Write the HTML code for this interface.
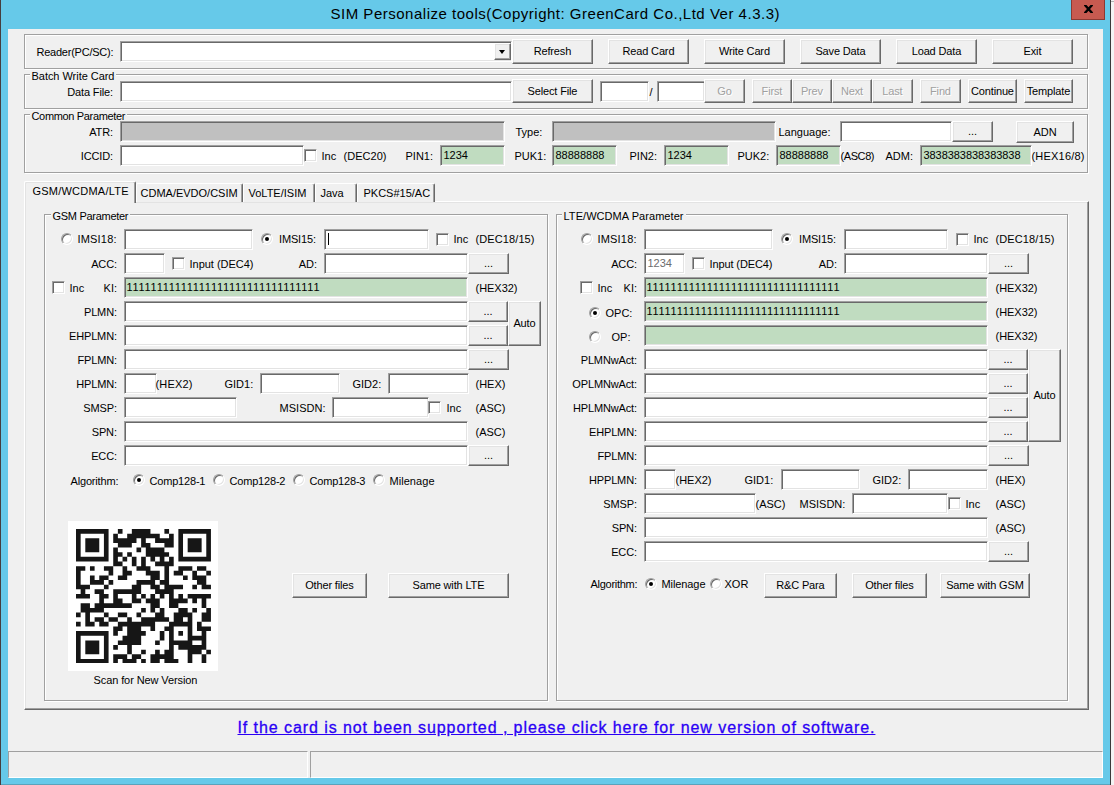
<!DOCTYPE html><html><head><meta charset="utf-8"><style>
*{margin:0;padding:0;box-sizing:border-box}
html,body{width:1114px;height:785px;overflow:hidden;background:#66c9e9;font-family:"Liberation Sans",sans-serif;font-size:11px;color:#000}
div{position:absolute}
.t{white-space:pre}
.ed{border:1px solid;border-color:#a0a0a0 #fff #fff #a0a0a0;box-shadow:inset 1px 1px #696969,inset -1px -1px #e3e3e3}
.bt{background:#f0f0f0;border:1px solid;border-color:#fff #696969 #696969 #fff;box-shadow:inset -1px -1px #a0a0a0,inset 1px 1px #e3e3e3}
.gp{border:1px solid #a0a0a0;box-shadow:inset 1px 1px #fff,1px 1px #fff}
.ck{background:#fff;border:1px solid;border-color:#a0a0a0 #fff #fff #a0a0a0;box-shadow:inset 1px 1px #696969,inset -1px -1px #e3e3e3}
.rd{width:12px;height:12px;border-radius:6px;background:#fff;border:1px solid;border-color:#a0a0a0 #fff #fff #a0a0a0;box-shadow:inset 1px 1px #696969,inset -1px -1px #e3e3e3}
</style></head><body>
<div style="left:0px;top:0px;width:1px;height:785px;background:#463e3e"></div>
<div style="left:1110px;top:0px;width:1px;height:785px;background:#3a3a3a"></div>
<div style="left:1px;top:784px;width:1109px;height:1px;background:#5aa3bb"></div>
<div style="left:1111px;top:0px;width:3px;height:785px;background:#f4f4f4"></div>
<div style="left:8px;top:29px;width:1095px;height:749px;background:#f0f0f0"></div>
<div style="left:1071px;top:0px;width:34px;height:20px;background:#c75a50;border:1px solid #8b3a33;border-top:0"></div>
<svg style="position:absolute;left:1084px;top:5px;overflow:hidden" width="9" height="8" viewBox="0 0 9 8"><path d="M0.6 -0.3 L8.4 8.3 M8.4 -0.3 L0.6 8.3" stroke="#000" stroke-width="2.4"/></svg>
<div style="left:1111px;top:1px;width:3px;height:1px;background:#b4b4b4"></div>
<div class="gp" style="left:24px;top:34px;width:1064px;height:35px"></div>
<div class="ed" style="left:120px;top:41px;width:392px;height:21px;background:#fff"></div>
<div class="bt" style="left:494px;top:43px;width:17px;height:17px"></div>
<div style="left:499px;top:50px;width:0;height:0;border-left:3.5px solid transparent;border-right:3.5px solid transparent;border-top:4px solid #000"></div>
<div class="bt" style="left:512px;top:39px;width:81px;height:25px"></div>
<div class="bt" style="left:608px;top:39px;width:81px;height:25px"></div>
<div class="bt" style="left:704px;top:39px;width:81px;height:25px"></div>
<div class="bt" style="left:800px;top:39px;width:81px;height:25px"></div>
<div class="bt" style="left:896px;top:39px;width:81px;height:25px"></div>
<div class="bt" style="left:992px;top:39px;width:81px;height:25px"></div>
<div class="gp" style="left:24px;top:74px;width:1064px;height:35px"></div>
<div class="ed" style="left:120px;top:81px;width:392px;height:21px;background:#fff"></div>
<div class="bt" style="left:512px;top:79px;width:81px;height:24px"></div>
<div class="ed" style="left:600px;top:81px;width:49px;height:21px;background:#fff"></div>
<div class="ed" style="left:657px;top:81px;width:48px;height:21px;background:#fff"></div>
<div class="bt" style="left:704px;top:79px;width:41px;height:24px"></div>
<div class="bt" style="left:752px;top:79px;width:40px;height:24px"></div>
<div class="bt" style="left:792px;top:79px;width:40px;height:24px"></div>
<div class="bt" style="left:832px;top:79px;width:40px;height:24px"></div>
<div class="bt" style="left:872px;top:79px;width:41px;height:24px"></div>
<div class="bt" style="left:920px;top:79px;width:41px;height:24px"></div>
<div class="bt" style="left:968px;top:79px;width:49px;height:24px"></div>
<div class="bt" style="left:1024px;top:79px;width:49px;height:24px"></div>
<div class="gp" style="left:24px;top:114px;width:1064px;height:59px"></div>
<div class="ed" style="left:120px;top:121px;width:385px;height:21px;background:#c0c0c0"></div>
<div class="ed" style="left:552px;top:121px;width:224px;height:21px;background:#c0c0c0"></div>
<div class="ed" style="left:840px;top:121px;width:112px;height:21px;background:#fff"></div>
<div class="bt" style="left:952px;top:121px;width:41px;height:21px"></div>
<div class="bt" style="left:1016px;top:121px;width:58px;height:22px"></div>
<div class="ed" style="left:120px;top:145px;width:184px;height:21px;background:#fff"></div>
<div class="ck" style="left:304px;top:149px;width:13px;height:13px"></div>
<div class="ed" style="left:440px;top:145px;width:65px;height:21px;background:#c0dcc0"></div>
<div class="ed" style="left:552px;top:145px;width:65px;height:21px;background:#c0dcc0"></div>
<div class="ed" style="left:664px;top:145px;width:65px;height:21px;background:#c0dcc0"></div>
<div class="ed" style="left:776px;top:145px;width:65px;height:21px;background:#c0dcc0"></div>
<div class="ed" style="left:920px;top:145px;width:112px;height:21px;background:#c0dcc0"></div>
<div style="left:24px;top:201px;width:1065px;height:509px;border:1px solid;border-color:#fff #696969 #696969 #fff;box-shadow:inset -1px -1px #a0a0a0,inset 1px 1px #e3e3e3"></div>
<div style="left:136px;top:183px;width:107px;height:19px;background:#f0f0f0;border:1px solid;border-bottom:0;border-color:#fff #696969 #fff #fff;box-shadow:inset -1px 0 #a0a0a0;border-radius:2px 2px 0 0"></div>
<div style="left:243px;top:183px;width:72px;height:19px;background:#f0f0f0;border:1px solid;border-bottom:0;border-color:#fff #696969 #fff #fff;box-shadow:inset -1px 0 #a0a0a0;border-radius:2px 2px 0 0"></div>
<div style="left:315px;top:183px;width:42px;height:19px;background:#f0f0f0;border:1px solid;border-bottom:0;border-color:#fff #696969 #fff #fff;box-shadow:inset -1px 0 #a0a0a0;border-radius:2px 2px 0 0"></div>
<div style="left:357px;top:183px;width:78px;height:19px;background:#f0f0f0;border:1px solid;border-bottom:0;border-color:#fff #696969 #fff #fff;box-shadow:inset -1px 0 #a0a0a0;border-radius:2px 2px 0 0"></div>
<div style="left:24px;top:181px;width:112px;height:22px;background:#f0f0f0;border:1px solid;border-bottom:0;border-color:#fff #696969 #fff #fff;box-shadow:inset -1px 0 #a0a0a0,inset 1px 1px #e3e3e3;border-radius:2px 2px 0 0"></div>
<div class="gp" style="left:44px;top:214px;width:504px;height:487px"></div>
<div class="rd" style="left:61px;top:233px"></div>
<div class="ed" style="left:124px;top:229px;width:129px;height:21px;background:#fff"></div>
<div class="rd" style="left:261px;top:233px"></div>
<div style="left:265px;top:237px;width:4px;height:4px;border-radius:2px;background:#000"></div>
<div class="ed" style="left:324px;top:229px;width:105px;height:21px;background:#fff"></div>
<div style="left:328px;top:233px;width:1px;height:12px;background:#000"></div>
<div class="ck" style="left:436px;top:233px;width:13px;height:13px"></div>
<div class="ed" style="left:124px;top:253px;width:41px;height:21px;background:#fff"></div>
<div class="ck" style="left:172px;top:257px;width:13px;height:13px"></div>
<div class="ed" style="left:324px;top:253px;width:144px;height:21px;background:#fff"></div>
<div class="bt" style="left:468px;top:253px;width:41px;height:21px"></div>
<div class="ck" style="left:52px;top:281px;width:13px;height:13px"></div>
<div class="ed" style="left:124px;top:277px;width:344px;height:21px;background:#c0dcc0"></div>
<div class="ed" style="left:124px;top:301px;width:344px;height:21px;background:#fff"></div>
<div class="bt" style="left:468px;top:301px;width:40px;height:21px"></div>
<div class="bt" style="left:508px;top:301px;width:33px;height:45px"></div>
<div class="ed" style="left:124px;top:325px;width:344px;height:21px;background:#fff"></div>
<div class="bt" style="left:468px;top:325px;width:40px;height:21px"></div>
<div class="ed" style="left:124px;top:349px;width:344px;height:21px;background:#fff"></div>
<div class="bt" style="left:468px;top:349px;width:41px;height:21px"></div>
<div class="ed" style="left:124px;top:373px;width:33px;height:21px;background:#fff"></div>
<div class="ed" style="left:260px;top:373px;width:80px;height:21px;background:#fff"></div>
<div class="ed" style="left:388px;top:373px;width:81px;height:21px;background:#fff"></div>
<div class="ed" style="left:124px;top:397px;width:113px;height:21px;background:#fff"></div>
<div class="ed" style="left:332px;top:397px;width:97px;height:21px;background:#fff"></div>
<div class="ck" style="left:428px;top:401px;width:13px;height:13px"></div>
<div class="ed" style="left:124px;top:421px;width:344px;height:21px;background:#fff"></div>
<div class="ed" style="left:124px;top:445px;width:344px;height:21px;background:#fff"></div>
<div class="bt" style="left:468px;top:445px;width:41px;height:21px"></div>
<div class="rd" style="left:133px;top:474px"></div>
<div style="left:137px;top:478px;width:4px;height:4px;border-radius:2px;background:#000"></div>
<div class="rd" style="left:213px;top:474px"></div>
<div class="rd" style="left:293px;top:474px"></div>
<div class="rd" style="left:373px;top:474px"></div>
<div style="left:68px;top:521px;width:150px;height:150px;background:#fff"></div>
<svg style="position:absolute;left:75.6px;top:528.9px" width="134.94" height="134.6" viewBox="0 0 29 29" preserveAspectRatio="none"><path fill="#161616" d="M0 0h7v1h-7zM9 0h1v1h-1zM12 0h4v1h-4zM19 0h1v1h-1zM22 0h7v1h-7zM0 1h1v1h-1zM6 1h1v1h-1zM8 1h1v1h-1zM11 1h7v1h-7zM20 1h1v1h-1zM22 1h1v1h-1zM28 1h1v1h-1zM0 2h1v1h-1zM2 2h3v1h-3zM6 2h1v1h-1zM8 2h5v1h-5zM14 2h1v1h-1zM17 2h4v1h-4zM22 2h1v1h-1zM24 2h3v1h-3zM28 2h1v1h-1zM0 3h1v1h-1zM2 3h3v1h-3zM6 3h1v1h-1zM9 3h3v1h-3zM14 3h2v1h-2zM19 3h2v1h-2zM22 3h1v1h-1zM24 3h3v1h-3zM28 3h1v1h-1zM0 4h1v1h-1zM2 4h3v1h-3zM6 4h1v1h-1zM8 4h1v1h-1zM13 4h1v1h-1zM15 4h4v1h-4zM22 4h1v1h-1zM24 4h3v1h-3zM28 4h1v1h-1zM0 5h1v1h-1zM6 5h1v1h-1zM8 5h2v1h-2zM11 5h1v1h-1zM15 5h5v1h-5zM22 5h1v1h-1zM28 5h1v1h-1zM0 6h7v1h-7zM8 6h1v1h-1zM10 6h1v1h-1zM12 6h1v1h-1zM14 6h1v1h-1zM16 6h1v1h-1zM18 6h1v1h-1zM20 6h1v1h-1zM22 6h7v1h-7zM8 7h2v1h-2zM12 7h1v1h-1zM14 7h1v1h-1zM17 7h4v1h-4zM0 8h2v1h-2zM3 8h1v1h-1zM6 8h2v1h-2zM10 8h1v1h-1zM13 8h3v1h-3zM19 8h1v1h-1zM22 8h3v1h-3zM26 8h2v1h-2zM0 9h1v1h-1zM7 9h1v1h-1zM10 9h2v1h-2zM15 9h3v1h-3zM19 9h1v1h-1zM21 9h2v1h-2zM25 9h1v1h-1zM28 9h1v1h-1zM0 10h1v1h-1zM3 10h1v1h-1zM5 10h2v1h-2zM9 10h2v1h-2zM16 10h2v1h-2zM19 10h1v1h-1zM23 10h1v1h-1zM25 10h3v1h-3zM0 11h1v1h-1zM3 11h3v1h-3zM7 11h1v1h-1zM13 11h4v1h-4zM18 11h2v1h-2zM26 11h2v1h-2zM0 12h3v1h-3zM6 12h1v1h-1zM12 12h2v1h-2zM16 12h2v1h-2zM19 12h4v1h-4zM25 12h1v1h-1zM27 12h2v1h-2zM1 13h1v1h-1zM4 13h2v1h-2zM8 13h6v1h-6zM17 13h4v1h-4zM0 14h3v1h-3zM5 14h2v1h-2zM8 14h1v1h-1zM12 14h1v1h-1zM14 14h1v1h-1zM16 14h1v1h-1zM18 14h1v1h-1zM20 14h1v1h-1zM22 14h1v1h-1zM24 14h5v1h-5zM5 15h1v1h-1zM8 15h2v1h-2zM12 15h2v1h-2zM15 15h3v1h-3zM20 15h4v1h-4zM25 15h1v1h-1zM27 15h1v1h-1zM1 16h2v1h-2zM4 16h8v1h-8zM16 16h2v1h-2zM20 16h2v1h-2zM27 16h1v1h-1zM1 17h5v1h-5zM14 17h1v1h-1zM16 17h1v1h-1zM18 17h1v1h-1zM22 17h2v1h-2zM25 17h1v1h-1zM28 17h1v1h-1zM0 18h1v1h-1zM2 18h1v1h-1zM6 18h1v1h-1zM9 18h2v1h-2zM13 18h1v1h-1zM17 18h2v1h-2zM21 18h4v1h-4zM27 18h2v1h-2zM2 19h1v1h-1zM4 19h2v1h-2zM7 19h2v1h-2zM11 19h1v1h-1zM14 19h6v1h-6zM21 19h2v1h-2zM24 19h1v1h-1zM27 19h2v1h-2zM0 20h1v1h-1zM2 20h2v1h-2zM5 20h2v1h-2zM9 20h8v1h-8zM20 20h5v1h-5zM26 20h1v1h-1zM8 21h2v1h-2zM11 21h3v1h-3zM16 21h1v1h-1zM19 21h2v1h-2zM24 21h1v1h-1zM26 21h3v1h-3zM0 22h7v1h-7zM8 22h1v1h-1zM11 22h4v1h-4zM18 22h1v1h-1zM20 22h1v1h-1zM22 22h1v1h-1zM24 22h1v1h-1zM27 22h1v1h-1zM0 23h1v1h-1zM6 23h1v1h-1zM10 23h4v1h-4zM18 23h1v1h-1zM20 23h1v1h-1zM24 23h4v1h-4zM0 24h1v1h-1zM2 24h3v1h-3zM6 24h1v1h-1zM9 24h5v1h-5zM17 24h1v1h-1zM20 24h5v1h-5zM27 24h1v1h-1zM0 25h1v1h-1zM2 25h3v1h-3zM6 25h1v1h-1zM8 25h1v1h-1zM11 25h1v1h-1zM20 25h1v1h-1zM22 25h6v1h-6zM0 26h1v1h-1zM2 26h3v1h-3zM6 26h1v1h-1zM11 26h1v1h-1zM14 26h1v1h-1zM17 26h1v1h-1zM19 26h2v1h-2zM24 26h3v1h-3zM28 26h1v1h-1zM0 27h1v1h-1zM6 27h1v1h-1zM8 27h3v1h-3zM12 27h2v1h-2zM16 27h5v1h-5zM24 27h1v1h-1zM27 27h1v1h-1zM0 28h7v1h-7zM8 28h1v1h-1zM10 28h3v1h-3zM14 28h1v1h-1zM16 28h2v1h-2zM19 28h3v1h-3zM24 28h1v1h-1zM27 28h1v1h-1z"/></svg>
<div class="bt" style="left:292px;top:573px;width:75px;height:25px"></div>
<div class="bt" style="left:388px;top:573px;width:121px;height:25px"></div>
<div class="gp" style="left:556px;top:214px;width:512px;height:487px"></div>
<div class="rd" style="left:581px;top:233px"></div>
<div class="ed" style="left:644px;top:229px;width:129px;height:21px;background:#fff"></div>
<div class="rd" style="left:781px;top:233px"></div>
<div style="left:785px;top:237px;width:4px;height:4px;border-radius:2px;background:#000"></div>
<div class="ed" style="left:844px;top:229px;width:104px;height:21px;background:#fff"></div>
<div class="ck" style="left:956px;top:233px;width:13px;height:13px"></div>
<div class="ed" style="left:644px;top:253px;width:41px;height:21px;background:#fff"></div>
<div class="ck" style="left:692px;top:257px;width:13px;height:13px"></div>
<div class="ed" style="left:844px;top:253px;width:144px;height:21px;background:#fff"></div>
<div class="bt" style="left:988px;top:253px;width:41px;height:21px"></div>
<div class="ck" style="left:580px;top:281px;width:13px;height:13px"></div>
<div class="ed" style="left:644px;top:277px;width:344px;height:21px;background:#c0dcc0"></div>
<div class="rd" style="left:589px;top:307px"></div>
<div style="left:593px;top:311px;width:4px;height:4px;border-radius:2px;background:#000"></div>
<div class="ed" style="left:644px;top:301px;width:344px;height:21px;background:#c0dcc0"></div>
<div class="rd" style="left:589px;top:331px"></div>
<div class="ed" style="left:644px;top:325px;width:344px;height:21px;background:#c0dcc0"></div>
<div class="ed" style="left:644px;top:349px;width:344px;height:21px;background:#fff"></div>
<div class="bt" style="left:988px;top:349px;width:40px;height:21px"></div>
<div class="ed" style="left:644px;top:373px;width:344px;height:21px;background:#fff"></div>
<div class="bt" style="left:988px;top:373px;width:40px;height:21px"></div>
<div class="ed" style="left:644px;top:397px;width:344px;height:21px;background:#fff"></div>
<div class="bt" style="left:988px;top:397px;width:40px;height:21px"></div>
<div class="ed" style="left:644px;top:421px;width:344px;height:21px;background:#fff"></div>
<div class="bt" style="left:988px;top:421px;width:40px;height:21px"></div>
<div class="ed" style="left:644px;top:445px;width:344px;height:21px;background:#fff"></div>
<div class="bt" style="left:988px;top:445px;width:41px;height:21px"></div>
<div class="bt" style="left:1028px;top:349px;width:33px;height:93px"></div>
<div class="ed" style="left:644px;top:469px;width:32px;height:21px;background:#fff"></div>
<div class="ed" style="left:781px;top:469px;width:79px;height:21px;background:#fff"></div>
<div class="ed" style="left:908px;top:469px;width:80px;height:21px;background:#fff"></div>
<div class="ed" style="left:644px;top:493px;width:112px;height:21px;background:#fff"></div>
<div class="ed" style="left:852px;top:493px;width:96px;height:21px;background:#fff"></div>
<div class="ck" style="left:948px;top:497px;width:13px;height:13px"></div>
<div class="ed" style="left:644px;top:517px;width:344px;height:21px;background:#fff"></div>
<div class="ed" style="left:644px;top:541px;width:344px;height:21px;background:#fff"></div>
<div class="bt" style="left:988px;top:541px;width:41px;height:21px"></div>
<div class="rd" style="left:645px;top:578px"></div>
<div style="left:649px;top:582px;width:4px;height:4px;border-radius:2px;background:#000"></div>
<div class="rd" style="left:710px;top:578px"></div>
<div class="bt" style="left:764px;top:573px;width:73px;height:25px"></div>
<div class="bt" style="left:852px;top:573px;width:75px;height:25px"></div>
<div class="bt" style="left:940px;top:573px;width:90px;height:25px"></div>
<div style="left:8px;top:751px;width:300px;height:27px;border:1px solid;border-color:#a0a0a0 #fff #fff #a0a0a0"></div>
<div style="left:310px;top:751px;width:793px;height:27px;border:1px solid;border-color:#a0a0a0 #fff #fff #a0a0a0"></div>
<div class="t" style="left:330.50px;top:4px;line-height:20px;font-size:15px;color:#000;letter-spacing:0.508px;">SIM Personalize tools(Copyright: GreenCard Co.,Ltd Ver 4.3.3)</div>
<div class="t" style="left:36.50px;top:46px;line-height:13px;font-size:11px;color:#000;letter-spacing:-0.237px;">Reader(PC/SC):</div>
<div class="t" style="left:533.68px;top:45px;line-height:13px;font-size:11px;color:#000;letter-spacing:-0.150px;">Refresh</div>
<div class="t" style="left:622.50px;top:45px;line-height:13px;font-size:11px;color:#000;letter-spacing:-0.150px;">Read Card</div>
<div class="t" style="left:718.99px;top:45px;line-height:13px;font-size:11px;color:#000;letter-spacing:-0.150px;">Write Card</div>
<div class="t" style="left:815.41px;top:45px;line-height:13px;font-size:11px;color:#000;letter-spacing:-0.150px;">Save Data</div>
<div class="t" style="left:911.72px;top:45px;line-height:13px;font-size:11px;color:#000;letter-spacing:-0.150px;">Load Data</div>
<div class="t" style="left:1023.55px;top:45px;line-height:13px;font-size:11px;color:#000;letter-spacing:-0.150px;">Exit</div>
<div class="t" style="left:31.50px;top:70px;line-height:13px;font-size:11px;color:#000;letter-spacing:-0.037px;background:linear-gradient(to bottom,transparent 3px,#f0f0f0 3px,#f0f0f0 6px,transparent 6px);padding:0 2px;margin-left:-2px;">Batch Write Card</div>
<div class="t" style="left:67.27px;top:86px;line-height:13px;font-size:11px;color:#000;letter-spacing:-0.150px;">Data File:</div>
<div class="t" style="left:527.57px;top:85px;line-height:13px;font-size:11px;color:#000;letter-spacing:-0.150px;">Select File</div>
<div class="t" style="left:649.50px;top:86px;line-height:13px;font-size:11px;color:#000;">/</div>
<div class="t" style="left:717.16px;top:85px;line-height:13px;font-size:11px;color:#a0a0a0;text-shadow:1px 1px #fff;">Go</div>
<div class="t" style="left:761.60px;top:85px;line-height:13px;font-size:11px;color:#a0a0a0;letter-spacing:-0.150px;text-shadow:1px 1px #fff;">First</div>
<div class="t" style="left:800.91px;top:85px;line-height:13px;font-size:11px;color:#a0a0a0;letter-spacing:-0.150px;text-shadow:1px 1px #fff;">Prev</div>
<div class="t" style="left:840.91px;top:85px;line-height:13px;font-size:11px;color:#a0a0a0;letter-spacing:-0.150px;text-shadow:1px 1px #fff;">Next</div>
<div class="t" style="left:882.33px;top:85px;line-height:13px;font-size:11px;color:#a0a0a0;letter-spacing:-0.150px;text-shadow:1px 1px #fff;">Last</div>
<div class="t" style="left:930.02px;top:85px;line-height:13px;font-size:11px;color:#a0a0a0;letter-spacing:-0.150px;text-shadow:1px 1px #fff;">Find</div>
<div class="t" style="left:971.00px;top:85px;line-height:13px;font-size:11px;color:#000;letter-spacing:-0.150px;">Continue</div>
<div class="t" style="left:1026.70px;top:85px;line-height:13px;font-size:11px;color:#000;letter-spacing:-0.150px;">Template</div>
<div class="t" style="left:31.50px;top:110px;line-height:13px;font-size:11px;color:#000;letter-spacing:-0.336px;background:linear-gradient(to bottom,transparent 3px,#f0f0f0 3px,#f0f0f0 6px,transparent 6px);padding:0 2px;margin-left:-2px;">Common Parameter</div>
<div class="t" style="left:89.20px;top:126px;line-height:13px;font-size:11px;color:#000;letter-spacing:-0.150px;">ATR:</div>
<div class="t" style="left:515.50px;top:126px;line-height:13px;font-size:11px;color:#000;">Type:</div>
<div class="t" style="left:778.50px;top:126px;line-height:13px;font-size:11px;color:#000;">Language:</div>
<div class="t" style="left:967.91px;top:125px;line-height:13px;font-size:11px;color:#000;">...</div>
<div class="t" style="left:1033.38px;top:126px;line-height:13px;font-size:11px;color:#000;">ADN</div>
<div class="t" style="left:80.75px;top:150px;line-height:13px;font-size:11px;color:#000;letter-spacing:-0.150px;">ICCID:</div>
<div class="t" style="left:321.50px;top:150px;line-height:13px;font-size:11px;color:#000;">Inc</div>
<div class="t" style="left:343.50px;top:150px;line-height:13px;font-size:11px;color:#000;letter-spacing:0.034px;">(DEC20)</div>
<div class="t" style="left:405.50px;top:150px;line-height:13px;font-size:11px;color:#000;">PIN1:</div>
<div class="t" style="left:443.50px;top:149px;line-height:13px;font-size:11px;color:#000;">1234</div>
<div class="t" style="left:514.50px;top:150px;line-height:13px;font-size:11px;color:#000;">PUK1:</div>
<div class="t" style="left:555.50px;top:149px;line-height:13px;font-size:11px;color:#000;">88888888</div>
<div class="t" style="left:629.50px;top:150px;line-height:13px;font-size:11px;color:#000;">PIN2:</div>
<div class="t" style="left:667.50px;top:149px;line-height:13px;font-size:11px;color:#000;">1234</div>
<div class="t" style="left:737.50px;top:150px;line-height:13px;font-size:11px;color:#000;">PUK2:</div>
<div class="t" style="left:779.50px;top:149px;line-height:13px;font-size:11px;color:#000;">88888888</div>
<div class="t" style="left:840.50px;top:150px;line-height:13px;font-size:11px;color:#000;letter-spacing:-0.412px;">(ASC8)</div>
<div class="t" style="left:885.50px;top:150px;line-height:13px;font-size:11px;color:#000;">ADM:</div>
<div class="t" style="left:923.50px;top:149px;line-height:13px;font-size:11px;color:#000;letter-spacing:-0.059px;">3838383838383838</div>
<div class="t" style="left:1031.50px;top:150px;line-height:13px;font-size:11px;color:#000;letter-spacing:0.205px;">(HEX16/8)</div>
<div class="t" style="left:140.50px;top:187px;line-height:13px;font-size:11px;color:#000;">CDMA/EVDO/CSIM</div>
<div class="t" style="left:248.50px;top:187px;line-height:13px;font-size:11px;color:#000;">VoLTE/ISIM</div>
<div class="t" style="left:320.50px;top:187px;line-height:13px;font-size:11px;color:#000;">Java</div>
<div class="t" style="left:363.50px;top:187px;line-height:13px;font-size:11px;color:#000;">PKCS#15/AC</div>
<div class="t" style="left:32.50px;top:185px;line-height:13px;font-size:11px;color:#000;letter-spacing:0.225px;">GSM/WCDMA/LTE</div>
<div class="t" style="left:52.50px;top:210px;line-height:13px;font-size:11px;color:#000;letter-spacing:-0.289px;background:linear-gradient(to bottom,transparent 3px,#f0f0f0 3px,#f0f0f0 6px,transparent 6px);padding:0 2px;margin-left:-2px;">GSM Parameter</div>
<div class="t" style="left:77.50px;top:233px;line-height:13px;font-size:11px;color:#000;letter-spacing:0.182px;">IMSI18:</div>
<div class="t" style="left:278.99px;top:233px;line-height:13px;font-size:11px;color:#000;letter-spacing:-0.150px;">IMSI15:</div>
<div class="t" style="left:453.50px;top:233px;line-height:13px;font-size:11px;color:#000;">Inc</div>
<div class="t" style="left:475.50px;top:233px;line-height:13px;font-size:11px;color:#000;letter-spacing:0.102px;">(DEC18/15)</div>
<div class="t" style="left:91.17px;top:258px;line-height:13px;font-size:11px;color:#000;letter-spacing:-0.150px;">ACC:</div>
<div class="t" style="left:189.50px;top:258px;line-height:13px;font-size:11px;color:#000;letter-spacing:-0.018px;">Input (DEC4)</div>
<div class="t" style="left:298.66px;top:258px;line-height:13px;font-size:11px;color:#000;">AD:</div>
<div class="t" style="left:483.91px;top:257px;line-height:13px;font-size:11px;color:#000;">...</div>
<div class="t" style="left:69.50px;top:282px;line-height:13px;font-size:11px;color:#000;">Inc</div>
<div class="t" style="left:103.55px;top:282px;line-height:13px;font-size:11px;color:#000;">KI:</div>
<div class="t" style="left:126.50px;top:281px;line-height:13px;font-size:11px;color:#000;letter-spacing:0.727px;">11111111111111111111111111111111</div>
<div class="t" style="left:475.50px;top:282px;line-height:13px;font-size:11px;color:#000;letter-spacing:-0.031px;">(HEX32)</div>
<div class="t" style="left:83.97px;top:306px;line-height:13px;font-size:11px;color:#000;letter-spacing:-0.150px;">PLMN:</div>
<div class="t" style="left:483.41px;top:305px;line-height:13px;font-size:11px;color:#000;">...</div>
<div class="t" style="left:513.40px;top:317px;line-height:13px;font-size:11px;color:#000;letter-spacing:-0.150px;">Auto</div>
<div class="t" style="left:68.99px;top:330px;line-height:13px;font-size:11px;color:#000;letter-spacing:-0.150px;">EHPLMN:</div>
<div class="t" style="left:483.41px;top:329px;line-height:13px;font-size:11px;color:#000;">...</div>
<div class="t" style="left:77.41px;top:354px;line-height:13px;font-size:11px;color:#000;letter-spacing:-0.150px;">FPLMN:</div>
<div class="t" style="left:483.91px;top:353px;line-height:13px;font-size:11px;color:#000;">...</div>
<div class="t" style="left:76.19px;top:378px;line-height:13px;font-size:11px;color:#000;letter-spacing:-0.150px;">HPLMN:</div>
<div class="t" style="left:155.50px;top:378px;line-height:13px;font-size:11px;color:#000;letter-spacing:0.188px;">(HEX2)</div>
<div class="t" style="left:224.50px;top:378px;line-height:13px;font-size:11px;color:#000;">GID1:</div>
<div class="t" style="left:352.50px;top:378px;line-height:13px;font-size:11px;color:#000;">GID2:</div>
<div class="t" style="left:475.50px;top:378px;line-height:13px;font-size:11px;color:#000;">(HEX)</div>
<div class="t" style="left:83.37px;top:402px;line-height:13px;font-size:11px;color:#000;letter-spacing:-0.150px;">SMSP:</div>
<div class="t" style="left:279.50px;top:402px;line-height:13px;font-size:11px;color:#000;letter-spacing:0.026px;">MSISDN:</div>
<div class="t" style="left:446.50px;top:402px;line-height:13px;font-size:11px;color:#000;">Inc</div>
<div class="t" style="left:475.50px;top:402px;line-height:13px;font-size:11px;color:#000;">(ASC)</div>
<div class="t" style="left:91.76px;top:426px;line-height:13px;font-size:11px;color:#000;letter-spacing:-0.150px;">SPN:</div>
<div class="t" style="left:475.50px;top:426px;line-height:13px;font-size:11px;color:#000;">(ASC)</div>
<div class="t" style="left:91.17px;top:450px;line-height:13px;font-size:11px;color:#000;letter-spacing:-0.150px;">ECC:</div>
<div class="t" style="left:483.91px;top:449px;line-height:13px;font-size:11px;color:#000;">...</div>
<div class="t" style="left:70.50px;top:475px;line-height:13px;font-size:11px;color:#000;letter-spacing:-0.170px;">Algorithm:</div>
<div class="t" style="left:149.50px;top:475px;line-height:13px;font-size:11px;color:#000;letter-spacing:-0.186px;">Comp128-1</div>
<div class="t" style="left:229.50px;top:475px;line-height:13px;font-size:11px;color:#000;letter-spacing:-0.186px;">Comp128-2</div>
<div class="t" style="left:309.50px;top:475px;line-height:13px;font-size:11px;color:#000;letter-spacing:-0.186px;">Comp128-3</div>
<div class="t" style="left:389.50px;top:475px;line-height:13px;font-size:11px;color:#000;letter-spacing:0.051px;">Milenage</div>
<div class="t" style="left:93.50px;top:674px;line-height:13px;font-size:11px;color:#000;letter-spacing:-0.094px;">Scan for New Version</div>
<div class="t" style="left:305.18px;top:579px;line-height:13px;font-size:11px;color:#000;letter-spacing:-0.150px;">Other files</div>
<div class="t" style="left:412.51px;top:579px;line-height:13px;font-size:11px;color:#000;letter-spacing:-0.150px;">Same with LTE</div>
<div class="t" style="left:563.50px;top:210px;line-height:13px;font-size:11px;color:#000;letter-spacing:0.056px;background:linear-gradient(to bottom,transparent 3px,#f0f0f0 3px,#f0f0f0 6px,transparent 6px);padding:0 2px;margin-left:-2px;">LTE/WCDMA Parameter</div>
<div class="t" style="left:597.50px;top:233px;line-height:13px;font-size:11px;color:#000;letter-spacing:0.182px;">IMSI18:</div>
<div class="t" style="left:798.99px;top:233px;line-height:13px;font-size:11px;color:#000;letter-spacing:-0.150px;">IMSI15:</div>
<div class="t" style="left:973.50px;top:233px;line-height:13px;font-size:11px;color:#000;">Inc</div>
<div class="t" style="left:995.50px;top:233px;line-height:13px;font-size:11px;color:#000;letter-spacing:0.102px;">(DEC18/15)</div>
<div class="t" style="left:611.17px;top:258px;line-height:13px;font-size:11px;color:#000;letter-spacing:-0.150px;">ACC:</div>
<div class="t" style="left:647.50px;top:257px;line-height:13px;font-size:11px;color:#6d6d6d;">1234</div>
<div class="t" style="left:709.50px;top:258px;line-height:13px;font-size:11px;color:#000;letter-spacing:-0.109px;">Input (DEC4)</div>
<div class="t" style="left:818.66px;top:258px;line-height:13px;font-size:11px;color:#000;">AD:</div>
<div class="t" style="left:1003.91px;top:257px;line-height:13px;font-size:11px;color:#000;">...</div>
<div class="t" style="left:597.50px;top:282px;line-height:13px;font-size:11px;color:#000;">Inc</div>
<div class="t" style="left:623.55px;top:282px;line-height:13px;font-size:11px;color:#000;">KI:</div>
<div class="t" style="left:646.50px;top:281px;line-height:13px;font-size:11px;color:#000;letter-spacing:0.727px;">11111111111111111111111111111111</div>
<div class="t" style="left:995.50px;top:282px;line-height:13px;font-size:11px;color:#000;letter-spacing:-0.031px;">(HEX32)</div>
<div class="t" style="left:605.50px;top:307px;line-height:13px;font-size:11px;color:#000;">OPC:</div>
<div class="t" style="left:646.50px;top:305px;line-height:13px;font-size:11px;color:#000;letter-spacing:0.727px;">11111111111111111111111111111111</div>
<div class="t" style="left:995.50px;top:306px;line-height:13px;font-size:11px;color:#000;letter-spacing:-0.031px;">(HEX32)</div>
<div class="t" style="left:611.50px;top:331px;line-height:13px;font-size:11px;color:#000;">OP:</div>
<div class="t" style="left:995.50px;top:330px;line-height:13px;font-size:11px;color:#000;letter-spacing:-0.031px;">(HEX32)</div>
<div class="t" style="left:580.73px;top:354px;line-height:13px;font-size:11px;color:#000;letter-spacing:-0.150px;">PLMNwAct:</div>
<div class="t" style="left:1003.41px;top:353px;line-height:13px;font-size:11px;color:#000;">...</div>
<div class="t" style="left:572.33px;top:378px;line-height:13px;font-size:11px;color:#000;letter-spacing:-0.150px;">OPLMNwAct:</div>
<div class="t" style="left:1003.41px;top:377px;line-height:13px;font-size:11px;color:#000;">...</div>
<div class="t" style="left:572.94px;top:402px;line-height:13px;font-size:11px;color:#000;letter-spacing:-0.150px;">HPLMNwAct:</div>
<div class="t" style="left:1003.41px;top:401px;line-height:13px;font-size:11px;color:#000;">...</div>
<div class="t" style="left:588.99px;top:426px;line-height:13px;font-size:11px;color:#000;letter-spacing:-0.150px;">EHPLMN:</div>
<div class="t" style="left:1003.41px;top:425px;line-height:13px;font-size:11px;color:#000;">...</div>
<div class="t" style="left:597.41px;top:450px;line-height:13px;font-size:11px;color:#000;letter-spacing:-0.150px;">FPLMN:</div>
<div class="t" style="left:1003.91px;top:449px;line-height:13px;font-size:11px;color:#000;">...</div>
<div class="t" style="left:1033.40px;top:389px;line-height:13px;font-size:11px;color:#000;letter-spacing:-0.150px;">Auto</div>
<div class="t" style="left:588.99px;top:474px;line-height:13px;font-size:11px;color:#000;letter-spacing:-0.150px;">HPPLMN:</div>
<div class="t" style="left:675.50px;top:474px;line-height:13px;font-size:11px;color:#000;letter-spacing:-0.013px;">(HEX2)</div>
<div class="t" style="left:744.50px;top:474px;line-height:13px;font-size:11px;color:#000;">GID1:</div>
<div class="t" style="left:872.50px;top:474px;line-height:13px;font-size:11px;color:#000;">GID2:</div>
<div class="t" style="left:995.50px;top:474px;line-height:13px;font-size:11px;color:#000;">(HEX)</div>
<div class="t" style="left:603.37px;top:498px;line-height:13px;font-size:11px;color:#000;letter-spacing:-0.150px;">SMSP:</div>
<div class="t" style="left:755.50px;top:498px;line-height:13px;font-size:11px;color:#000;">(ASC)</div>
<div class="t" style="left:799.50px;top:498px;line-height:13px;font-size:11px;color:#000;">MSISDN:</div>
<div class="t" style="left:965.50px;top:498px;line-height:13px;font-size:11px;color:#000;">Inc</div>
<div class="t" style="left:995.50px;top:498px;line-height:13px;font-size:11px;color:#000;">(ASC)</div>
<div class="t" style="left:611.76px;top:522px;line-height:13px;font-size:11px;color:#000;letter-spacing:-0.150px;">SPN:</div>
<div class="t" style="left:995.50px;top:522px;line-height:13px;font-size:11px;color:#000;">(ASC)</div>
<div class="t" style="left:611.17px;top:546px;line-height:13px;font-size:11px;color:#000;letter-spacing:-0.150px;">ECC:</div>
<div class="t" style="left:1003.91px;top:545px;line-height:13px;font-size:11px;color:#000;">...</div>
<div class="t" style="left:590.50px;top:578px;line-height:13px;font-size:11px;color:#000;letter-spacing:-0.281px;">Algorithm:</div>
<div class="t" style="left:661.50px;top:578px;line-height:13px;font-size:11px;color:#000;letter-spacing:-0.092px;">Milenage</div>
<div class="t" style="left:724.50px;top:578px;line-height:13px;font-size:11px;color:#000;">XOR</div>
<div class="t" style="left:776.26px;top:579px;line-height:13px;font-size:11px;color:#000;letter-spacing:-0.150px;">R&amp;C Para</div>
<div class="t" style="left:865.18px;top:579px;line-height:13px;font-size:11px;color:#000;letter-spacing:-0.150px;">Other files</div>
<div class="t" style="left:946.17px;top:579px;line-height:13px;font-size:11px;color:#000;letter-spacing:-0.150px;">Same with GSM</div>
<div class="t" style="left:237.50px;top:718px;line-height:20px;font-size:16px;color:#2a00f5;letter-spacing:0.925px;text-decoration:underline;-webkit-text-stroke:0.3px #2a00f5;">If the card is not been supported , please click here for new version of software.</div>
</body></html>
